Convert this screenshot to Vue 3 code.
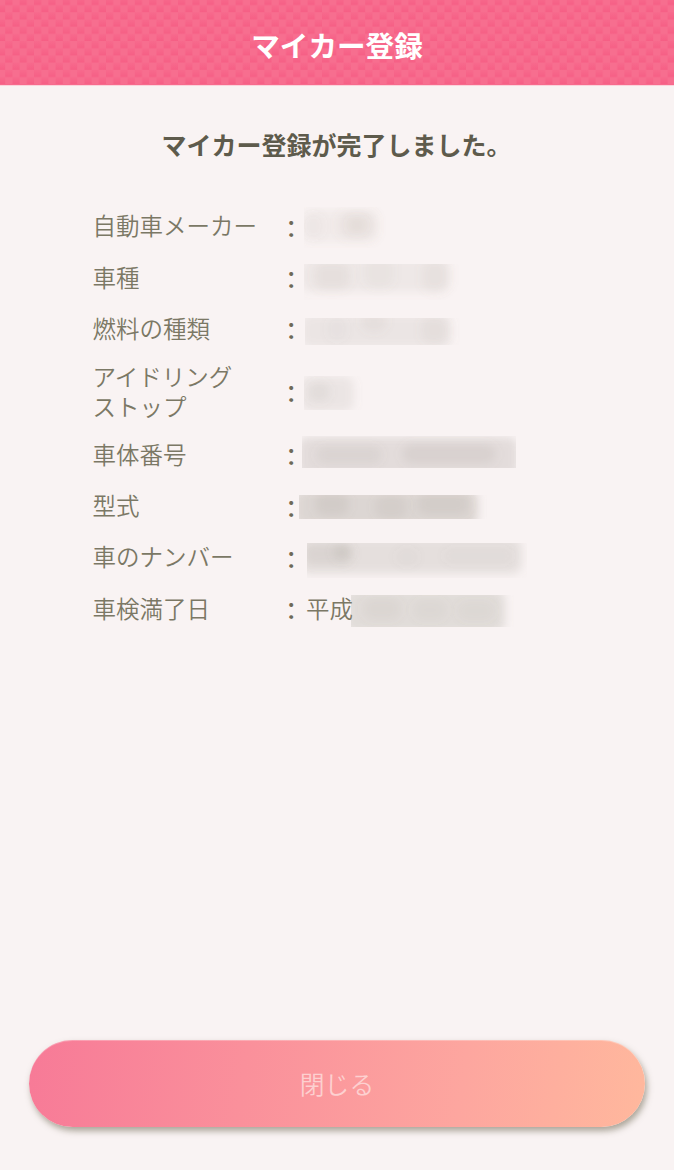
<template>
  <div class="page">
    <header class="header">
      <svg class="pattern" aria-hidden="true">
        <defs>
          <linearGradient id="tile" x1="0" y1="0" x2="0" y2="1">
            <stop offset="0" stop-color="#f76a8d" />
            <stop offset="1" stop-color="#f65f85" />
          </linearGradient>
          <pattern id="checker" x="5.2" y="-2.2" width="14.4" height="14.4" patternUnits="userSpaceOnUse">
            <rect width="14.4" height="14.4" fill="#f76e8f" />
            <rect width="7.2" height="7.2" fill="url(#tile)" />
            <rect x="7.2" y="7.2" width="7.2" height="7.2" fill="url(#tile)" />
          </pattern>
        </defs>
        <rect width="100%" height="100%" fill="url(#checker)" />
      </svg>
      <h1>マイカー登録</h1>
    </header>

    <main>
      <h2>マイカー登録が完了しました。</h2>
      <dl>
        <div v-for="(row, i) in rows" :key="i" class="row">
          <dt>{{ row.label }}</dt>
          <span class="colon">：</span>
          <dd>
            <span v-if="row.text" class="text">{{ row.text }}</span>
            <svg
              class="hidden-value"
              :width="row.w"
              :height="row.h"
              :style="{ marginLeft: row.x + 'px', marginTop: row.y + 'px' }"
            >
              <defs>
                <filter :id="'soft' + i" x="-50%" y="-80%" width="200%" height="260%">
                  <feGaussianBlur stdDeviation="5" />
                </filter>
              </defs>
              <rect
                v-for="(b, n) in row.blobs"
                :key="n"
                :x="b[0]"
                :y="b[1]"
                :width="b[2]"
                :height="b[3]"
                :fill-opacity="b[4]"
                rx="10"
                fill="#8a8478"
                :filter="'url(#soft' + i + ')'"
              />
            </svg>
          </dd>
        </div>
      </dl>
    </main>

    <footer>
      <button type="button">閉じる</button>
    </footer>
  </div>
</template>

<script setup>
// blobs: [x, y, width, height, opacity]
const rows = [
  { label: '自動車メーカー', x: -3, y: -2, w: 84, h: 41, blobs: [[-2, 3, 76, 32, 0.07], [-2, 6, 22, 26, 0.04], [34, 4, 38, 28, 0.07], [44, 10, 18, 16, 0.08]] },
  { label: '車種', x: -3, y: 3, w: 155, h: 36, blobs: [[-4, -6, 150, 34, 0.1], [10, -2, 36, 28, 0.08], [60, -8, 30, 32, 0.05], [118, -4, 26, 32, 0.07]] },
  { label: '燃料の種類', x: -2, y: 6, w: 155, h: 27, blobs: [[-4, -4, 150, 34, 0.13], [22, -2, 20, 26, 0.04], [56, -8, 26, 22, 0.07], [116, -2, 27, 28, 0.07]] },
  { label: 'アイドリング\nストップ', x: -3, y: 1, w: 60, h: 34, blobs: [[-4, 0, 54, 36, 0.13], [4, 6, 22, 20, 0.09]] },
  { label: '車体番号', x: -5, y: -2, w: 214, h: 32, blobs: [[-4, 1, 220, 40, 0.2], [14, 10, 66, 18, 0.09], [100, 8, 94, 20, 0.12]] },
  { label: '型式', x: -8, y: 6, w: 188, h: 24, blobs: [[-5, -6, 184, 38, 0.26], [16, -3, 34, 24, 0.12], [76, 0, 32, 24, 0.1], [118, -2, 52, 22, 0.11]] },
  { label: '車のナンバー', x: 0, y: 3, w: 220, h: 35, blobs: [[-8, -6, 223, 37, 0.18], [-4, 0, 50, 22, 0.12], [26, 1, 18, 16, 0.14], [88, 5, 24, 18, 0.04], [136, 5, 70, 16, 0.04]] },
  { label: '車検満了日', text: '平成', x: -2, y: 3, w: 163, h: 32, blobs: [[-6, -6, 160, 44, 0.21], [12, 3, 38, 22, 0.07], [62, 5, 34, 20, 0.06], [106, 6, 38, 20, 0.05]] },
]
</script>

<style>
body {
  margin: 0;
  background: #f9f3f3;
}
</style>

<style scoped>
.page {
  display: flex;
  flex-direction: column;
  box-sizing: border-box;
  width: 100%;
  height: 1170px;
  background: #f9f3f3;
  color: #7b7865;
  font-family: 'Noto Sans CJK JP', sans-serif;
}

.header {
  position: relative;
  display: flex;
  align-items: center;
  justify-content: center;
  flex: none;
  box-sizing: border-box;
  height: 86px;
  padding-top: 5px;
  border-bottom: 1px solid #fbd3db;
}

.pattern {
  position: absolute;
  top: 0;
  left: 0;
  width: 100%;
  height: 100%;
}

h1 {
  position: relative;
  margin: 0;
  color: #fff;
  font-size: 28.6px;
  font-weight: 700;
  line-height: 40px;
}

main {
  flex: 1;
}

h2 {
  margin: 40px 0 0;
  padding-right: 1px;
  color: #5e5b4c;
  text-align: center;
  font-size: 25px;
  font-weight: 700;
  line-height: 36px;
}

dl {
  display: flex;
  flex-direction: column;
  gap: 16px;
  margin: 47.4px 0 0 92.5px;
}

.row {
  display: flex;
  align-items: center;
  min-height: 35.3px;
}

dt {
  width: 187px;
  margin: -1px 0 1px;
  font-size: 23.5px;
  font-weight: 350;
  line-height: 29.3px;
  white-space: pre-line;
}

.colon {
  width: 27.5px;
  padding-top: 3px;
  color: #6d6a58;
  font-size: 23.4px;
  font-weight: 500;
  line-height: 29.3px;
}

dd {
  display: flex;
  align-items: flex-start;
  height: 35.3px;
  margin: 0;
}

.text {
  margin-left: -1px;
  font-size: 23.5px;
  font-weight: 350;
  line-height: 33.3px;
}

.hidden-value {
  display: block;
  flex: none;
  overflow: hidden;
}

footer {
  padding: 0 29px 43px;
}

button {
  display: block;
  width: 100%;
  height: 87px;
  padding: 0 0 2px;
  border: none;
  border-radius: 44px;
  background: linear-gradient(98deg, #f77a97 0%, #fda69f 70%, #ffb89d 100%);
  box-shadow: 2px 4px 6px rgba(95, 90, 65, 0.5), inset 0 1px 0 rgba(255, 255, 255, 0.25);
  color: #fdd0d0;
  font-family: inherit;
  font-size: 24.8px;
  font-weight: 350;
}
</style>
